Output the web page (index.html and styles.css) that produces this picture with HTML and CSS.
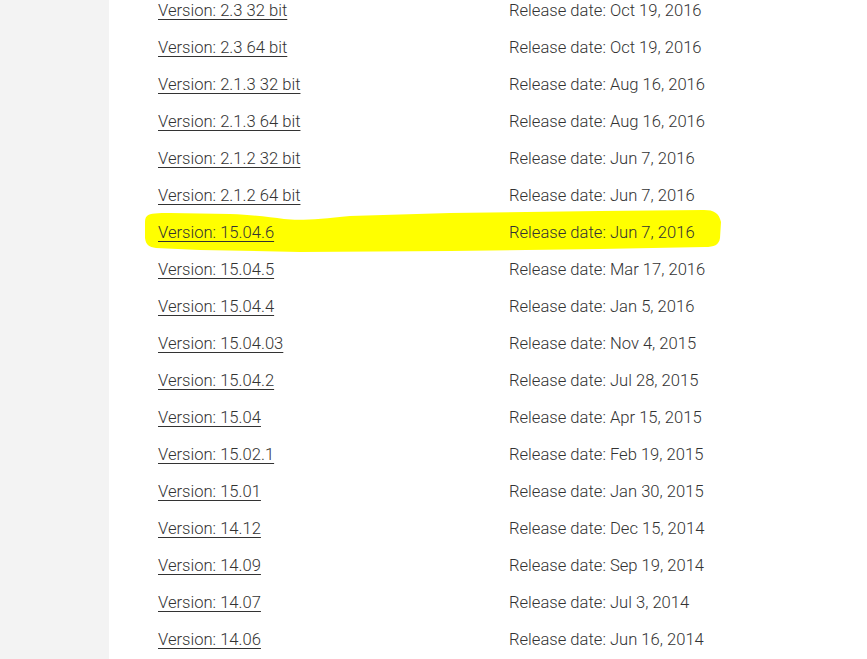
FILE: index.html
```html
<!DOCTYPE html>
<html lang="en">
<head>
<meta charset="utf-8">
<title>Versions</title>
<link rel="stylesheet" href="styles.css">
</head>
<body>
<div class="page">
  <aside class="side"></aside>
  <main class="content">
    <ul class="versions">
      <li class="row"><a href="#">Version: 2.3 32 bit</a><span class="date">Release date: Oct 19, 2016</span></li>
      <li class="row"><a href="#">Version: 2.3 64 bit</a><span class="date">Release date: Oct 19, 2016</span></li>
      <li class="row"><a href="#">Version: 2.1.3 32 bit</a><span class="date">Release date: Aug 16, 2016</span></li>
      <li class="row"><a href="#">Version: 2.1.3 64 bit</a><span class="date">Release date: Aug 16, 2016</span></li>
      <li class="row"><a href="#">Version: 2.1.2 32 bit</a><span class="date">Release date: Jun 7, 2016</span></li>
      <li class="row"><a href="#">Version: 2.1.2 64 bit</a><span class="date">Release date: Jun 7, 2016</span></li>
      <li class="row marked">
        <svg class="marker" width="590" height="50" viewBox="140 205 590 50" aria-hidden="true">
          <path d="M147 216 C150 213 158 213 170 213 L230 214 C255 215 270 217 284 219 C300 221 320 219 350 216 L450 213 L600 211 L704 210 C714 210 719 213 721 222 L720 238 C719 245 714 247 705 247 L600 249 L450 251 L300 252 L200 250 L156 248 C149 247 146 245 145 238 L145 224 C145 220 145 218 147 216 Z" fill="#ffff00"/>
        </svg>
        <a href="#">Version: 15.04.6</a><span class="date">Release date: Jun 7, 2016</span></li>
      <li class="row"><a href="#">Version: 15.04.5</a><span class="date">Release date: Mar 17, 2016</span></li>
      <li class="row"><a href="#">Version: 15.04.4</a><span class="date">Release date: Jan 5, 2016</span></li>
      <li class="row"><a href="#">Version: 15.04.03</a><span class="date">Release date: Nov 4, 2015</span></li>
      <li class="row"><a href="#">Version: 15.04.2</a><span class="date">Release date: Jul 28, 2015</span></li>
      <li class="row"><a href="#">Version: 15.04</a><span class="date">Release date: Apr 15, 2015</span></li>
      <li class="row"><a href="#">Version: 15.02.1</a><span class="date">Release date: Feb 19, 2015</span></li>
      <li class="row"><a href="#">Version: 15.01</a><span class="date">Release date: Jan 30, 2015</span></li>
      <li class="row"><a href="#">Version: 14.12</a><span class="date">Release date: Dec 15, 2014</span></li>
      <li class="row"><a href="#">Version: 14.09</a><span class="date">Release date: Sep 19, 2014</span></li>
      <li class="row"><a href="#">Version: 14.07</a><span class="date">Release date: Jul 3, 2014</span></li>
      <li class="row"><a href="#">Version: 14.06</a><span class="date">Release date: Jun 16, 2014</span></li>
    </ul>
  </main>
</div>
</body>
</html>
```
FILE: styles.css
```css
html, body {
  margin: 0;
  padding: 0;
  background: #ffffff;
  overflow: hidden;
}
body {
  font-family: Roboto, "Liberation Sans", Arial, sans-serif;
  font-weight: 300;
  font-size: 16.6px;
  color: #333333;
}
.page {
  display: flex;
  height: 659px;
}
.side {
  width: 109px;
  flex: 0 0 109px;
  background: #f3f3f3;
}
.content {
  flex: 1;
  padding-left: 49px;
}
.versions {
  list-style: none;
  margin: -8px 0 0 0;
  padding: 0;
}
.row {
  position: relative;
  display: grid;
  grid-template-columns: 351px auto;
  height: 37px;
  line-height: 37px;
}
.row a {
  color: #333333;
  text-decoration: underline;
  text-underline-offset: 3px;
  text-decoration-thickness: 1px;
  justify-self: start;
  position: relative;
}
.date {
  position: relative;
}
.marker {
  position: absolute;
  left: -18px;
  top: -9px;
  z-index: 0;
}
```
